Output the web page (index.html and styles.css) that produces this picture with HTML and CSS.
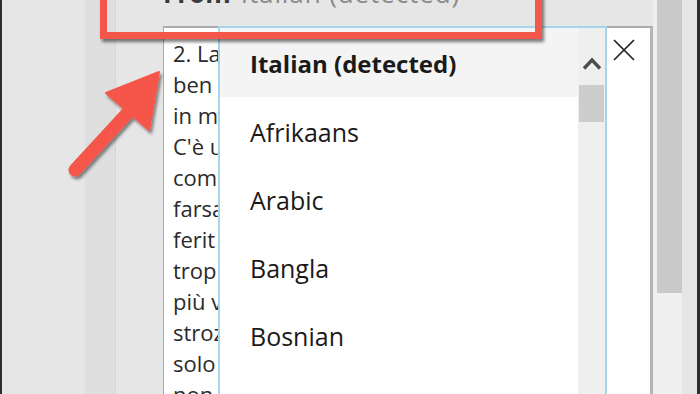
FILE: index.html
```html
<!DOCTYPE html>
<html>
    <head>
        <meta name="viewport" content="width=device-width, initial-scale=1">
        <link rel="stylesheet" href="styles.css">
    </head>
    <body>
        <div class="screen">
            <div class="edge"></div>
            <div class="pane">
                <!-- language picker label, mostly scrolled off the top -->
                <div class="from"><b>From</b><span class="lang">Italian (detected)</span></div>

                <div class="textbox">
                    <!-- source text, only the part left of the open dropdown shows -->
                    <p class="source">
                        2. La<br>
                        ben<br>
                        in m<br>
                        C'è u<br>
                        com<br>
                        farsa<br>
                        ferit<br>
                        trop<br>
                        più v<br>
                        stroz<br>
                        solo<br>
                        non
                    </p>

                    <div class="dropdown">
                        <ul class="options">
                            <li class="option current">Italian (detected)</li>
                            <li class="option">Afrikaans</li>
                            <li class="option">Arabic</li>
                            <li class="option">Bangla</li>
                            <li class="option">Bosnian</li>
                        </ul>
                        <div class="track">
                            <svg class="chev" width="20" height="13" viewBox="0 0 20 13">
                                <polyline points="2,11.5 10,3 18,11.5" fill="none" stroke="#4f4f4f" stroke-width="3.4"/>
                            </svg>
                            <div class="thumb"></div>
                        </div>
                    </div>

                    <button class="close" type="button">
                        <svg width="22" height="22" viewBox="0 0 22 22">
                            <path d="M1 1 L21 21 M21 1 L1 21" stroke="#222" stroke-width="1.7" fill="none"/>
                        </svg>
                    </button>
                </div>

                <!-- annotation: red callout box and arrow -->
                <div class="callout"></div>
                <svg class="arrow" width="110" height="130" viewBox="60 60 110 130">
                    <defs>
                        <filter id="drop" x="-20%" y="-20%" width="150%" height="150%">
                            <feDropShadow dx="2" dy="3" stdDeviation="1.6" flood-color="#000" flood-opacity="0.45"/>
                        </filter>
                    </defs>
                    <g filter="url(#drop)" fill="#f5564a" stroke="#f5564a">
                        <line x1="75" y1="170" x2="133" y2="107" stroke-width="13" stroke-linecap="round"/>
                        <polygon points="159,72 106,93 149,130" stroke-width="2" stroke-linejoin="round"/>
                    </g>
                </svg>
            </div>
            <div class="pane-scroll"><div class="pane-thumb"></div></div>
            <div class="gutter"></div>
            <div class="edge edge-right"></div>
        </div>
    </body>
</html>
```

FILE: styles.css
```css
* {
    box-sizing: border-box;
}
html, body {
    margin: 0;
    height: 100%;
}
body {
    overflow: hidden;
    background-color: #e6e6e6;
    font-family: "Open Sans", "Noto Sans", sans-serif;
    color: #222222;
}

/* Outer frame */
.screen {
    display: flex;
    height: 394px;
}
.edge {
    width: 2px;
    background-color: #2e2e2e;
}
.edge-right {
    width: 3px;
}
.gutter {
    width: 15px;
    background-color: #e6e6e6;
}
.pane-scroll {
    width: 29px;
    padding-left: 4px;
    background-color: #efefef;
}
.pane-thumb {
    width: 25px;
    height: 293px;
    background-color: #c9c9c9;
}

/* Task pane */
.pane {
    position: relative;
    flex: 1;
    padding-left: 161px;
    background: linear-gradient(to right,
        #e6e6e6 0 83px,
        #dfdfdf 83px 113px,
        #d6d6d6 113px 114px,
        #e6e6e6 114px);
}
.from {
    display: flex;
    align-items: flex-end;
    gap: 10px;
    height: 26px;
    padding-bottom: 20px;
    font-size: 26px;
    line-height: 26px;
    white-space: nowrap;
}
.from b {
    color: #3a3a3a;
}
.lang {
    color: #8a8a8a;
    letter-spacing: 0.9px;
}

/* Source text box */
.textbox {
    position: relative;
    height: 400px;
    background-color: #ffffff;
    border-style: solid;
    border-color: #ababab #b5b5b5 #ababab #a9a9a9;
    border-width: 2px 3px 0 1px;
    padding: 10px 0 0 9px;
}
.source {
    width: 45px;
    margin: 0;
    overflow: hidden;
    font-size: 22px;
    line-height: 31px;
    color: #2b2b2b;
    white-space: nowrap;
}
.close {
    position: absolute;
    top: 11px;
    right: 15px;
    width: 22px;
    height: 22px;
    padding: 0;
    border: none;
    background: none;
}
.close svg {
    display: block;
}

/* Language dropdown */
.dropdown {
    position: absolute;
    top: -2px;
    left: 54px;
    width: 389px;
    bottom: -40px;
    display: flex;
    background-color: #ffffff;
    border: 2px solid #a6d6ea;
    border-bottom: none;
}
.options {
    flex: 1;
    margin: 0;
    padding: 0;
    list-style: none;
}
.option {
    display: flex;
    align-items: center;
    height: 68px;
    padding: 2px 0 0 30px;
    font-size: 25px;
    color: #1a1a1a;
}
.option.current {
    height: 69px;
    font-weight: 700;
    font-size: 24px;
    background-color: #f4f4f4;
}
.track {
    display: flex;
    flex-direction: column;
    align-items: center;
    width: 27px;
    background-color: #efefef;
}
.chev {
    display: block;
    margin-top: 29px;
}
.thumb {
    width: 25px;
    height: 37px;
    margin-top: 15px;
    background-color: #cdcdcd;
}

/* Annotation overlay */
.callout {
    position: absolute;
    left: 98px;
    top: -12px;
    width: 442px;
    height: 51px;
    border: 7px solid #f5564a;
    box-shadow: 2px 3px 3px rgba(0, 0, 0, 0.5);
}
.arrow {
    position: absolute;
    left: 58px;
    top: 60px;
}
```
